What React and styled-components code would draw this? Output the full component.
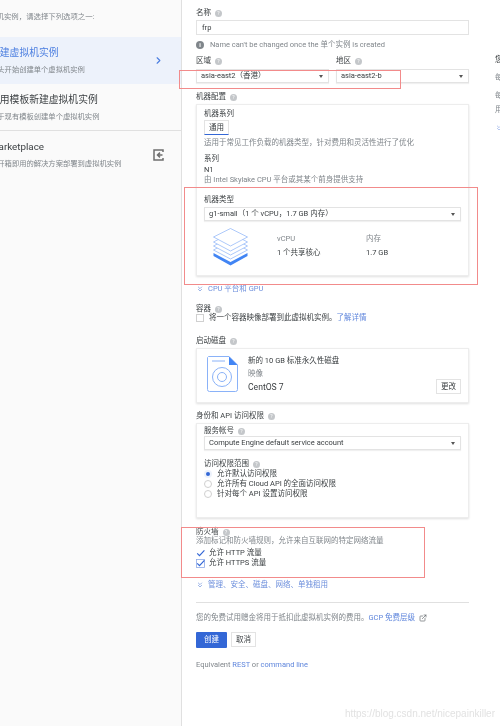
import styled, { createGlobalStyle } from "styled-components";
import { ChevronRight, ChevronsDown, ExternalLink } from "lucide-react";

const GlobalStyle = createGlobalStyle`
  html, body {
    margin: 0;
    padding: 0;
    background: #fff;
  }
  body {
    font-family: Roboto, "Noto Sans CJK SC", sans-serif;
    font-size: 7.5px;
    line-height: 10px;
    color: #3c4043;
  }
`;

const Page = styled.div`
  position: relative;
  display: flex;
  width: 500px;
  height: 726px;
  overflow: hidden;
  background: #fff;
  filter: blur(0.4px);
`;

const Sidebar = styled.aside`
  flex: 0 0 181px;
  height: 100%;
  background: #fafafa;
  border-right: 1px solid #e0e0e0;
  overflow: hidden;
  padding-top: 12px;
`;

const Intro = styled.div`
  margin-left: -33px;
  height: 10px;
  font-size: 7.4px;
  color: #80868b;
  white-space: nowrap;
  margin-bottom: 15px;
`;

const Option = styled.div`
  display: flex;
  align-items: center;
  justify-content: space-between;
  height: ${(p) => p.$height}px;
  padding-right: 17px;
  background: ${(p) => (p.$active ? "#edf2fb" : "transparent")};
  border-bottom: ${(p) => (p.$divided ? "1px solid #e0e0e0" : "none")};
  box-sizing: border-box;
`;

const OptionText = styled.div`
  margin-left: -10px;
  white-space: nowrap;
`;

const OptionTitle = styled.div`
  font-size: 9.8px;
  line-height: 13px;
  color: ${(p) => (p.$active ? "#4a7de0" : "#3c4043")};
`;

const OptionSub = styled.div`
  margin-top: 6px;
  font-size: 7.3px;
  line-height: 10px;
  color: #80868b;
`;

const Main = styled.main`
  flex: 0 0 273px;
  margin-left: 14px;
  padding-top: 8px;
`;

const Label = styled.div`
  display: flex;
  align-items: center;
  gap: 4px;
  height: 10px;
  margin-top: ${(p) => p.$mt || 0}px;
  color: #3c4043;
  white-space: nowrap;
`;

const Muted = styled.div`
  height: 10px;
  margin-top: ${(p) => p.$mt || 0}px;
  color: #80868b;
  white-space: nowrap;
`;

const Value = styled.div`
  height: 10px;
  margin-top: ${(p) => p.$mt || 0}px;
  font-size: ${(p) => p.$size || 7.5}px;
  color: #3c4043;
  white-space: nowrap;
`;

const Help = styled.span`
  display: inline-flex;
  align-items: center;
  justify-content: center;
  width: 7px;
  height: 7px;
  border-radius: 50%;
  background: #c4c7ca;
  color: #fff;
  font-size: 5px;
  line-height: 7px;
`;

const TextInput = styled.div`
  height: 15px;
  margin-top: 2px;
  padding: 0 5px;
  border: 1px solid #e3e3e3;
  box-sizing: border-box;
  line-height: 13px;
  color: #3c4043;
`;

const Hint = styled.div`
  display: flex;
  align-items: center;
  gap: 6px;
  height: 10px;
  margin-top: 5px;
  color: #80868b;
  white-space: nowrap;
`;

const InfoDot = styled.span`
  width: 8px;
  height: 8px;
  border-radius: 50%;
  background: #80868b;
  color: #fff;
  font-size: 6px;
  font-weight: 700;
  line-height: 8px;
  text-align: center;
`;

const Columns = styled.div`
  display: grid;
  grid-template-columns: 133px 133px;
  gap: 7px;
  margin-top: 6px;
`;

const SelectBox = styled.div`
  display: flex;
  align-items: center;
  justify-content: space-between;
  height: 14px;
  margin-top: ${(p) => p.$mt || 0}px;
  padding: 0 5px 0 4px;
  border: 1px solid #e3e3e3;
  box-shadow: 0 1px 1px rgba(0, 0, 0, 0.06);
  box-sizing: border-box;
  color: #3c4043;
  white-space: nowrap;
`;

const Caret = styled.span`
  width: 0;
  height: 0;
  border-left: 2.5px solid transparent;
  border-right: 2.5px solid transparent;
  border-top: 3px solid #555;
`;

const Card = styled.div`
  height: ${(p) => p.$height}px;
  margin-top: 2px;
  padding: ${(p) => p.$top}px 7px 0;
  border: 1px solid #ededed;
  box-shadow: 0 1px 2px rgba(0, 0, 0, 0.12);
  box-sizing: border-box;
`;

const Tab = styled.div`
  width: 25px;
  height: 15px;
  margin-top: 1px;
  border: 1px solid #e3e3e3;
  border-bottom: 1px solid #3367d6;
  box-sizing: border-box;
  line-height: 13px;
  text-align: center;
  color: #3c4043;
`;

const Specs = styled.div`
  display: flex;
  margin-top: 7px;
  margin-left: 9px;
`;

const SpecColumn = styled.div`
  width: ${(p) => p.$width}px;
  margin-left: ${(p) => p.$ml || 0}px;
  padding-top: 6px;
`;

const SpecLabel = styled.div`
  height: 10px;
  color: #80868b;
`;

const SpecValue = styled.div`
  height: 10px;
  margin-top: 4px;
  color: #3c4043;
`;

const MoreLink = styled.div`
  display: flex;
  align-items: center;
  gap: 4px;
  height: 10px;
  margin-top: ${(p) => p.$mt}px;
  color: #6d8fdc;
  white-space: nowrap;
`;

const A = styled.span`
  color: #5f86dc;
`;

const CheckRow = styled.div`
  display: flex;
  align-items: center;
  gap: ${(p) => p.$gap || 4}px;
  height: ${(p) => p.$height || 10}px;
  color: #3c4043;
  white-space: nowrap;
`;

const Box = styled.span`
  flex: 0 0 auto;
  width: 8px;
  height: 8px;
  border: 1px solid #d0d0d0;
  box-sizing: border-box;
`;

const Tick = styled.svg`
  flex: 0 0 auto;
  width: 9px;
  height: 9px;
`;

const DiskBody = styled.div`
  display: flex;
  gap: 10px;
  height: 100%;
  padding-left: 3px;
`;

const DiskText = styled.div`
  flex: 1;
  position: relative;
`;

const SmallButton = styled.div`
  position: absolute;
  right: 0;
  bottom: 8px;
  width: 25px;
  height: 15px;
  border: 1px solid #e3e3e3;
  box-sizing: border-box;
  line-height: 13px;
  text-align: center;
  color: #3c4043;
`;

const Radio = styled.span`
  flex: 0 0 auto;
  width: 8px;
  height: 8px;
  border-radius: 50%;
  box-sizing: border-box;
  border: ${(p) => (p.$on ? "2px solid #edf2fb" : "1px solid #d0d0d0")};
  background: ${(p) => (p.$on ? "#3367d6" : "transparent")};
`;

const Checks = styled.div`
  margin-top: 2px;
`;

const Divider = styled.div`
  height: 1px;
  margin-top: 12px;
  background: #e0e0e0;
`;

const FreeLine = styled.div`
  display: flex;
  align-items: center;
  gap: 4px;
  height: 10px;
  margin-top: 10px;
  color: #80868b;
  white-space: nowrap;
`;

const Actions = styled.div`
  display: flex;
  gap: 4px;
  margin-top: 9px;
`;

const Primary = styled.div`
  width: 31px;
  height: 16px;
  background: #3367d6;
  border-radius: 1px;
  color: #fff;
  line-height: 16px;
  text-align: center;
`;

const Secondary = styled.div`
  width: 25px;
  height: 15px;
  border: 1px solid #e3e3e3;
  box-sizing: border-box;
  line-height: 13px;
  text-align: center;
  color: #3c4043;
`;

const Rail = styled.aside`
  flex: 0 0 auto;
  margin-left: 26px;
  padding-top: 55px;
  white-space: nowrap;
`;

const RailLine = styled.div`
  height: 10px;
  margin-bottom: ${(p) => p.$mb}px;
  color: ${(p) => p.$color || "#80868b"};
`;

/* hand-drawn annotations from the original screenshot */
const Mark = styled.div`
  position: absolute;
  left: ${(p) => p.$x}px;
  top: ${(p) => p.$y}px;
  width: ${(p) => p.$w}px;
  height: ${(p) => p.$h}px;
  border: 1px solid #f28b8b;
  box-sizing: border-box;
  pointer-events: none;
`;

const Watermark = styled.div`
  position: absolute;
  right: 5px;
  top: 709px;
  font-family: "Liberation Sans", sans-serif;
  font-size: 10px;
  color: #e2e2e2;
  white-space: nowrap;
`;

const HelpIcon = () => <Help>?</Help>;

const Layers = () => (
  <svg width="35" height="38" viewBox="0 0 35 38" fill="#fff" stroke="#8ab2f8" strokeWidth="0.7">
    <path d="M0.5 25 L17.5 34 L34.5 25 L34.5 28 L17.5 37.5 L0.5 28 Z" fill="#4285f4" stroke="none" />
    <path d="M0.5 22 L17.5 13 L34.5 22 L17.5 31 Z" />
    <path d="M0.5 18 L17.5 9 L34.5 18 L17.5 27 Z" />
    <path d="M0.5 14 L17.5 5 L34.5 14 L17.5 23 Z" />
    <path d="M0.5 9 L17.5 0.5 L34.5 9 L17.5 18 Z" />
  </svg>
);

const DiskIcon = () => (
  <svg width="31" height="36" viewBox="0 0 31 36" fill="none" stroke="#8ab2f8">
    <path d="M1.5 0.5 H22 L30.5 9 V33.5 a2 2 0 0 1 -2 2 H2.5 a2 2 0 0 1 -2 -2 V1.5 Z" />
    <path d="M22 0.5 L30.5 9 H22 Z" fill="#4285f4" stroke="none" />
    <path d="M5 5 H18" />
    <circle cx="15" cy="21" r="9.5" />
    <circle cx="15" cy="21" r="4.5" />
  </svg>
);

const PortalIcon = () => (
  <svg width="11" height="12" viewBox="0 0 11 12" fill="none" stroke="#6f6f6f" strokeWidth="1.5">
    <path d="M10 3 V1 H1 V11 H10 V9" />
    <path d="M4.5 6 H9.5 M7 3.6 L4.5 6 L7 8.4" />
  </svg>
);

const CheckMark = ({ boxed }) => (
  <Tick viewBox="0 0 9 9" fill="none" stroke="#3367d6" strokeWidth="1.2">
    {boxed && <rect x="0.5" y="0.5" width="8" height="8" stroke="#8fabe8" strokeWidth="0.8" />}
    <path d="M1.2 4.4 L3.5 6.6 L8.4 1.4" />
  </Tick>
);

export default function App() {
  return (
    <>
      <GlobalStyle />
      <Page>
        <Sidebar>
          <Intro>新建虚拟机实例，请选择下列选项之一:</Intro>
          <Option $height={47} $active>
            <OptionText>
              <OptionTitle $active>新建虚拟机实例</OptionTitle>
              <OptionSub>从头开始创建单个虚拟机实例</OptionSub>
            </OptionText>
            <ChevronRight size={11} color="#4a7de0" strokeWidth={2.4} />
          </Option>
          <Option $height={47} $divided>
            <OptionText>
              <OptionTitle>使用模板新建虚拟机实例</OptionTitle>
              <OptionSub>基于现有模板创建单个虚拟机实例</OptionSub>
            </OptionText>
          </Option>
          <Option $height={47}>
            <OptionText>
              <OptionTitle>Marketplace</OptionTitle>
              <OptionSub>将开箱即用的解决方案部署到虚拟机实例</OptionSub>
            </OptionText>
            <PortalIcon />
          </Option>
        </Sidebar>

        <Main>
          <Label>名称 <HelpIcon /></Label>
          <TextInput>frp</TextInput>
          <Hint>
            <InfoDot>i</InfoDot>
            Name can't be changed once the 单个实例 is created
          </Hint>

          <Columns>
            <div>
              <Label>区域 <HelpIcon /></Label>
              <SelectBox $mt={3}>asia-east2（香港）<Caret /></SelectBox>
            </div>
            <div>
              <Label>地区 <HelpIcon /></Label>
              <SelectBox $mt={3}>asia-east2-b<Caret /></SelectBox>
            </div>
          </Columns>

          <Label $mt={9}>机器配置 <HelpIcon /></Label>
          <Card $height={172} $top={4}>
            <Label>机器系列</Label>
            <Tab>通用</Tab>
            <Muted $mt={3}>适用于常见工作负载的机器类型，针对费用和灵活性进行了优化</Muted>
            <Label $mt={6}>系列</Label>
            <Value $mt={1}>N1</Value>
            <Muted>由 Intel Skylake CPU 平台或其某个前身提供支持</Muted>
            <Label $mt={10}>机器类型</Label>
            <SelectBox $mt={2}>g1-small（1 个 vCPU，1.7 GB 内存）<Caret /></SelectBox>
            <Specs>
              <Layers />
              <SpecColumn $width={89} $ml={29}>
                <SpecLabel>vCPU</SpecLabel>
                <SpecValue>1 个共享核心</SpecValue>
              </SpecColumn>
              <SpecColumn $width={60}>
                <SpecLabel>内存</SpecLabel>
                <SpecValue>1.7 GB</SpecValue>
              </SpecColumn>
            </Specs>
          </Card>

          <MoreLink $mt={8}>
            <ChevronsDown size={8} color="#6d8fdc" />
            CPU 平台和 GPU
          </MoreLink>

          <Label $mt={10}>容器 <HelpIcon /></Label>
          <CheckRow $height={8} $gap={5}>
            <Box />
            <span>将一个容器映像部署到此虚拟机实例。<A>了解详情</A></span>
          </CheckRow>

          <Label $mt={14}>启动磁盘 <HelpIcon /></Label>
          <Card $height={55} $top={7}>
            <DiskBody>
              <DiskIcon />
              <DiskText>
                <Value>新的 10 GB 标准永久性磁盘</Value>
                <Muted $mt={3}>映像</Muted>
                <Value $mt={3} $size={8.6}>CentOS 7</Value>
                <SmallButton>更改</SmallButton>
              </DiskText>
            </DiskBody>
          </Card>

          <Label $mt={8}>身份和 API 访问权限 <HelpIcon /></Label>
          <Card $height={95} $top={2}>
            <Label>服务帐号 <HelpIcon /></Label>
            <SelectBox>Compute Engine default service account<Caret /></SelectBox>
            <Label $mt={9}>访问权限范围 <HelpIcon /></Label>
            <CheckRow $gap={5}><Radio $on />允许默认访问权限</CheckRow>
            <CheckRow $gap={5}><Radio />允许所有 Cloud API 的全面访问权限</CheckRow>
            <CheckRow $gap={5}><Radio />针对每个 API 设置访问权限</CheckRow>
          </Card>

          <Label $mt={9}>防火墙 <HelpIcon /></Label>
          <Muted $mt={-1}>添加标记和防火墙规则，允许来自互联网的特定网络流量</Muted>
          <Checks>
            <CheckRow><CheckMark />允许 HTTP 流量</CheckRow>
            <CheckRow><CheckMark boxed />允许 HTTPS 流量</CheckRow>
          </Checks>

          <MoreLink $mt={12}>
            <ChevronsDown size={8} color="#6d8fdc" />
            管理、安全、磁盘、网络、单独租用
          </MoreLink>

          <Divider />
          <FreeLine>
            <span>您的免费试用赠金将用于抵扣此虚拟机实例的费用。<A>GCP 免费层级</A></span>
            <ExternalLink size={8} color="#5f6368" />
          </FreeLine>

          <Actions>
            <Primary>创建</Primary>
            <Secondary>取消</Secondary>
          </Actions>

          <Muted $mt={12}>Equivalent <A>REST</A> or <A>command line</A></Muted>
        </Main>

        <Rail>
          <RailLine $mb={8} $color="#3c4043">您</RailLine>
          <RailLine $mb={8}>每</RailLine>
          <RailLine $mb={4}>每</RailLine>
          <RailLine $mb={9}>用</RailLine>
          <RailLine $mb={0}><ChevronsDown size={8} color="#8fabe8" /></RailLine>
        </Rail>

        <Mark $x={179} $y={70} $w={222} $h={19} />
        <Mark $x={184} $y={187} $w={294} $h={98} />
        <Mark $x={181} $y={527} $w={244} $h={51} />
        <Watermark>https://blog.csdn.net/nicepainkiller</Watermark>
      </Page>
    </>
  );
}
